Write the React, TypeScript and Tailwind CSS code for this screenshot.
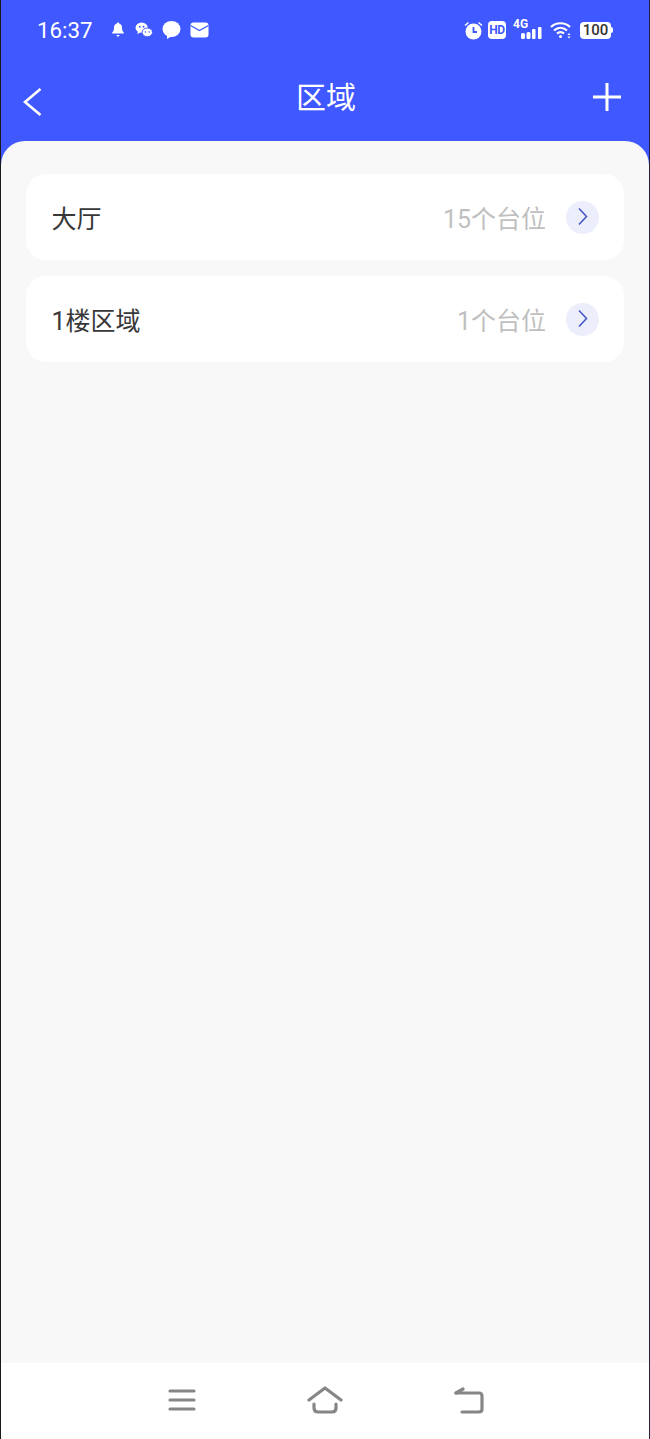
const cjk = "font-['Roboto','Noto_Sans_CJK_SC',sans-serif]";

function Row({ name, count }: { name: string; count: string }) {
  return (
    <div className="flex h-[86px] items-center justify-between rounded-[20px] bg-white pl-[25.5px] pr-[25px]">
      <span className="mt-[6px] text-[25px] leading-[30px] text-[#383838]">{name}</span>
      <div className="flex items-center">
        <span className="mt-[6px] text-[25px] leading-[30px] text-[#bfbfbf]">{count}</span>
        <span className="ml-[20px] flex h-[33px] w-[33px] items-center justify-center rounded-full bg-[#eceffb]">
          <svg width="33" height="33" viewBox="0 0 33 33" fill="none">
            <path d="M13 7.500 L20.500 15.500 L13 23.500" stroke="#4658c4" strokeWidth="1.600" />
          </svg>
        </span>
      </div>
    </div>
  );
}

export default function App() {
  return (
    <div className={`flex h-[1439px] w-[650px] flex-col bg-[#3f58ff] border-l border-r border-l-[#1a1a1a] border-r-[#222244] ${cjk}`}>
      {/* status bar */}
      <div className="flex h-[60px] items-center justify-between pl-[36px] pr-[36px] text-white">
        <div className="flex items-center">
          <span className="w-[56px] text-[22.3px] leading-none">16:37</span>
          <div className="ml-[17px] flex items-center gap-[9px]">
            <svg width="16" height="17" viewBox="0 0 16 16" fill="white">
              <path d="M8 1c.7 0 1.100.5 1.200 1 2 .6 2.800 2.300 2.800 4.200 0 2.600.7 3.800 1.800 4.800v1H2.200v-1C3.300 10 4 8.800 4 6.200 4 4.300 4.800 2.600 6.800 2c.1-.5.500-1 1.200-1z" />
              <path d="M6.500 13.500h3c0 .9-.6 1.500-1.500 1.500s-1.500-.6-1.500-1.500z" />
            </svg>
            <svg width="18" height="16" viewBox="0 0 19 17" fill="white">
              <ellipse cx="7" cy="6" rx="6.500" ry="5.500" />
              <path d="M3 10l-.5 3 3-2z" />
              <ellipse cx="13" cy="11" rx="5.500" ry="4.600" stroke="#3f58ff" strokeWidth="1" />
              <circle cx="5" cy="5" r="1" fill="#3f58ff" />
              <circle cx="9" cy="5" r="1" fill="#3f58ff" />
              <circle cx="11" cy="10.500" r=".8" fill="#3f58ff" />
              <circle cx="15" cy="10.500" r=".8" fill="#3f58ff" />
            </svg>
            <svg width="19" height="18" viewBox="0 0 19 18" fill="white">
              <ellipse cx="9.500" cy="8" rx="9" ry="8" />
              <path d="M5 13.500 L5 18 L10 15z" />
            </svg>
            <svg width="19" height="16" viewBox="0 0 19 16">
              <rect x="0.500" y="0.500" width="18" height="15" rx="3" fill="white" />
              <path d="M0.500 3.500 L9.500 8.500 L18.500 3.500" stroke="#3f58ff" strokeWidth="1.300" fill="none" />
            </svg>
          </div>
        </div>
        <div className="flex items-center">
          <svg width="19" height="19" viewBox="0 0 19 19" fill="white">
            <circle cx="9.500" cy="10.500" r="8" />
            <path d="M1 4.500 L4.500 1.500 M18 4.500 L14.500 1.500" stroke="white" strokeWidth="1.500" />
            <path d="M9.500 6 V11 H13" stroke="#3f58ff" strokeWidth="1.800" fill="none" />
          </svg>
          <span className="ml-[5px] flex h-[18px] w-[18px] items-center justify-center rounded-[4px] bg-white text-[12px] font-bold leading-none tracking-[-0.5px] text-[#3f58ff]">
            HD
          </span>
          <div className="relative ml-[7px] h-[18px] w-[29px]">
            <span className="absolute left-0 top-[-3px] text-[12px] font-bold leading-[12px]">4G</span>
            <svg className="absolute left-0 top-0" width="29" height="18" viewBox="0 0 29 18" fill="white">
              <rect x="8" y="12" width="4" height="6" rx="1.500" />
              <rect x="13.500" y="11" width="4" height="7" rx="1.500" />
              <rect x="19" y="8" width="3.500" height="10" rx="1" />
              <rect x="25" y="6" width="3.500" height="12" rx="1" />
            </svg>
          </div>
          <svg className="ml-[8px]" width="22" height="18" viewBox="0 0 22 18" fill="none" stroke="white" strokeWidth="2.200">
            <path d="M1 6 C6 1 15 1 20 6" />
            <path d="M4 9.500 C8 6 13 6 17 9.500" />
            <path d="M7 12.500 C9 11 12 11 14 12.500" />
            <circle cx="10.500" cy="15.500" r="1.500" fill="white" stroke="none" />
            <path d="M19 12 l-1.500 2 h3z M19 17.500 l-1.500 -2 h3z" fill="white" stroke="none" />
          </svg>
          <div className="ml-[8px] flex items-center">
            <span className="flex h-[17px] w-[31px] items-center justify-center rounded-[4px] bg-white text-[15px] font-medium leading-none text-[#333333]">
              100
            </span>
            <span className="h-[6px] w-[2px] rounded-r-[2px] bg-white" />
          </div>
        </div>
      </div>

      {/* title bar */}
      <div className="flex h-[81px] items-start justify-between pl-[21px] pr-[28px] text-white">
        <div className="w-[49px]">
          <svg className="mt-[27px]" width="20" height="30" viewBox="0 0 20 30" fill="none" stroke="white" strokeWidth="2.600">
            <path d="M18.500 2 L3 15 L18.500 28" />
          </svg>
        </div>
        <span className="mt-[19px] text-[30px] leading-[38px]">区域</span>
        <div className="flex w-[40px] justify-end">
          <svg className="mt-[23px]" width="28" height="28" viewBox="0 0 28 28" fill="none" stroke="white" strokeWidth="3">
            <path d="M0 14 H28 M14 0 V28" />
          </svg>
        </div>
      </div>

      {/* content */}
      <div className="flex flex-1 flex-col gap-[16px] rounded-t-[24px] bg-[#f8f8f8] px-[25px] pt-[33px]">
        <Row name="大厅" count="15个台位" />
        <Row name="1楼区域" count="1个台位" />
      </div>

      {/* nav bar */}
      <div className="flex h-[76px] items-center justify-center bg-white">
        <div className="ml-[2px] flex w-[316px] items-center justify-between pb-[2px]">
          <svg width="28" height="22" viewBox="0 0 28 22" fill="none" stroke="#868686" strokeWidth="3.200" strokeLinecap="round">
            <path d="M2 2 H26 M2 11 H26 M2 20 H26" />
          </svg>
          <svg width="36" height="28" viewBox="0 0 36 28" fill="none" stroke="#868686" strokeWidth="3.200" strokeLinecap="round" strokeLinejoin="round">
            <path d="M2 14 L18 2 L34 14" />
            <path d="M7 18 V22 Q7 26 11 26 H25 Q29 26 29 22 V18" />
          </svg>
          <svg width="30" height="27" viewBox="0 0 30 27" fill="none" stroke="#868686" strokeWidth="3.200" strokeLinecap="round" strokeLinejoin="round">
            <path d="M2 6 H25 Q28 6 28 9 V22 Q28 25 25 25 H8" />
            <path d="M2 6 L9 2" />
          </svg>
        </div>
      </div>
    </div>
  );
}
